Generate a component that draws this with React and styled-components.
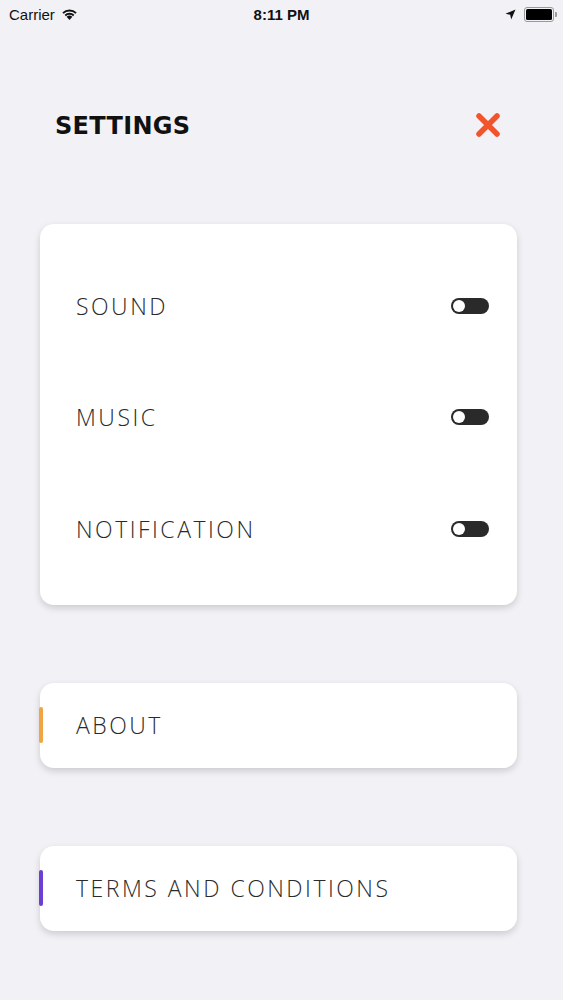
import React, { useState } from "react"
import styled, { createGlobalStyle } from "styled-components"

const GlobalStyle = createGlobalStyle`
  body {
    margin: 0;
    background: #f2f1f6;
    font-family: "Open Sans", "Liberation Sans", sans-serif;
  }
`

const Screen = styled.div`
  width: 563px;
  min-height: 1000px;
  background: #f2f1f6;
  display: flex;
  flex-direction: column;
`

const StatusBar = styled.div`
  height: 28px;
  display: grid;
  grid-template-columns: 1fr auto 1fr;
  align-items: center;
  padding: 0 9px;
  font-family: "Liberation Sans", Arial, sans-serif;
  font-size: 15px;
  color: #111;
`

const StatusLeft = styled.div`
  display: flex;
  align-items: center;
  gap: 6px;
`

const StatusTime = styled.div`
  font-weight: 700;
`

const StatusRight = styled.div`
  display: flex;
  justify-content: flex-end;
  align-items: center;
  gap: 8px;
`

const Battery = styled.div`
  width: 26px;
  height: 11px;
  border: 1px solid #999;
  border-radius: 3px;
  padding: 1px;
  position: relative;
  &::before {
    content: "";
    display: block;
    width: 100%;
    height: 100%;
    background: #000;
    border-radius: 1.5px;
  }
  &::after {
    content: "";
    position: absolute;
    right: -4px;
    top: 4px;
    width: 2px;
    height: 5px;
    background: #999;
    border-radius: 0 1px 1px 0;
  }
`

const Header = styled.div`
  display: flex;
  justify-content: space-between;
  align-items: center;
  padding: 82px 62px 0 55px;
  height: 30px;
`

const Title = styled.h1`
  margin: 0;
  padding-top: 2px;
  font-family: "DejaVu Sans", sans-serif;
  font-weight: 700;
  font-size: 24px;
  letter-spacing: 0.3px;
  color: #111;
`

const Content = styled.div`
  display: flex;
  flex-direction: column;
  padding: 84px 46px 0 40px;
`

const Card = styled.div`
  background: #fff;
  border-radius: 14px;
  box-shadow: 0 3px 7px rgba(0, 0, 0, 0.16);
  display: flex;
  flex-direction: column;
  padding: ${(p) => p.$pad || "0"};
  margin-bottom: ${(p) => p.$mb || "0"};
  box-sizing: border-box;
  position: relative;
`

const SettingRow = styled.div`
  height: 111.5px;
  display: flex;
  align-items: center;
  justify-content: space-between;
  padding: 0 28px 0 36px;
`

const Label = styled.span`
  font-family: "Open Sans", sans-serif;
  font-weight: 300;
  font-size: 23px;
  letter-spacing: 2.5px;
  color: #2a2a2a;
`

const Toggle = styled.button`
  width: 38px;
  height: 16px;
  border-radius: 8px;
  border: none;
  padding: 0;
  background: ${(p) => (p.$on ? "#4cd964" : "#2a2a2a")};
  position: relative;
  cursor: pointer;
  &::after {
    content: "";
    position: absolute;
    top: 2px;
    left: ${(p) => (p.$on ? "24px" : "2px")};
    width: 12px;
    height: 12px;
    border-radius: 50%;
    background: #fff;
  }
`

const LinkCard = styled(Card)`
  height: 85px;
  justify-content: center;
  padding-left: 36px;
  &::before {
    content: "";
    position: absolute;
    left: -1px;
    top: 50%;
    transform: translateY(-50%);
    width: 4px;
    height: 36px;
    border-radius: 2px;
    background: ${(p) => p.$accent};
  }
`

const CloseButton = styled.button`
  background: none;
  border: none;
  padding: 0;
  display: flex;
  cursor: pointer;
`

const App = () => {
  const [settings, setSettings] = useState({ sound: false, music: false, notification: false })

  const flip = (key) => setSettings({ ...settings, [key]: !settings[key] })

  return (
    <Screen>
      <GlobalStyle />
      <StatusBar>
        <StatusLeft>
          Carrier
          <svg width="17" height="12" viewBox="0 0 17 12">
            <path d="M8.5 12 L5.6 8.8 A4.2 4.2 0 0 1 11.4 8.8 Z" fill="#111" />
            <path d="M3.6 6.8 A7 7 0 0 1 13.4 6.8 L12.1 8.2 A5.2 5.2 0 0 0 4.9 8.2 Z" fill="#111" />
            <path d="M1.3 4.4 A10.3 10.3 0 0 1 15.7 4.4 L14.4 5.8 A8.4 8.4 0 0 0 2.6 5.8 Z" fill="#111" />
          </svg>
        </StatusLeft>
        <StatusTime>8:11 PM</StatusTime>
        <StatusRight>
          <svg width="11" height="11" viewBox="0 0 11 11">
            <path d="M10.5 0.5 L0.5 4.8 L5.2 5.8 L6.2 10.5 Z" fill="#111" />
          </svg>
          <Battery />
        </StatusRight>
      </StatusBar>

      <Header>
        <Title>SETTINGS</Title>
        <CloseButton>
          <svg width="26" height="26" viewBox="0 0 26 26">
            <path d="M4 4 L22 22 M22 4 L4 22" stroke="#f2552c" strokeWidth="5.5" strokeLinecap="round" />
          </svg>
        </CloseButton>
      </Header>

      <Content>
        <Card $pad="26px 0 20px" $mb="78px">
          <SettingRow>
            <Label>SOUND</Label>
            <Toggle $on={settings.sound} onClick={() => flip("sound")} />
          </SettingRow>
          <SettingRow>
            <Label>MUSIC</Label>
            <Toggle $on={settings.music} onClick={() => flip("music")} />
          </SettingRow>
          <SettingRow>
            <Label>NOTIFICATION</Label>
            <Toggle $on={settings.notification} onClick={() => flip("notification")} />
          </SettingRow>
        </Card>

        <LinkCard $accent="#f0a444" $mb="78px">
          <Label>ABOUT</Label>
        </LinkCard>

        <LinkCard $accent="#6b3fd4">
          <Label>TERMS AND CONDITIONS</Label>
        </LinkCard>
      </Content>
    </Screen>
  )
}

export default App
